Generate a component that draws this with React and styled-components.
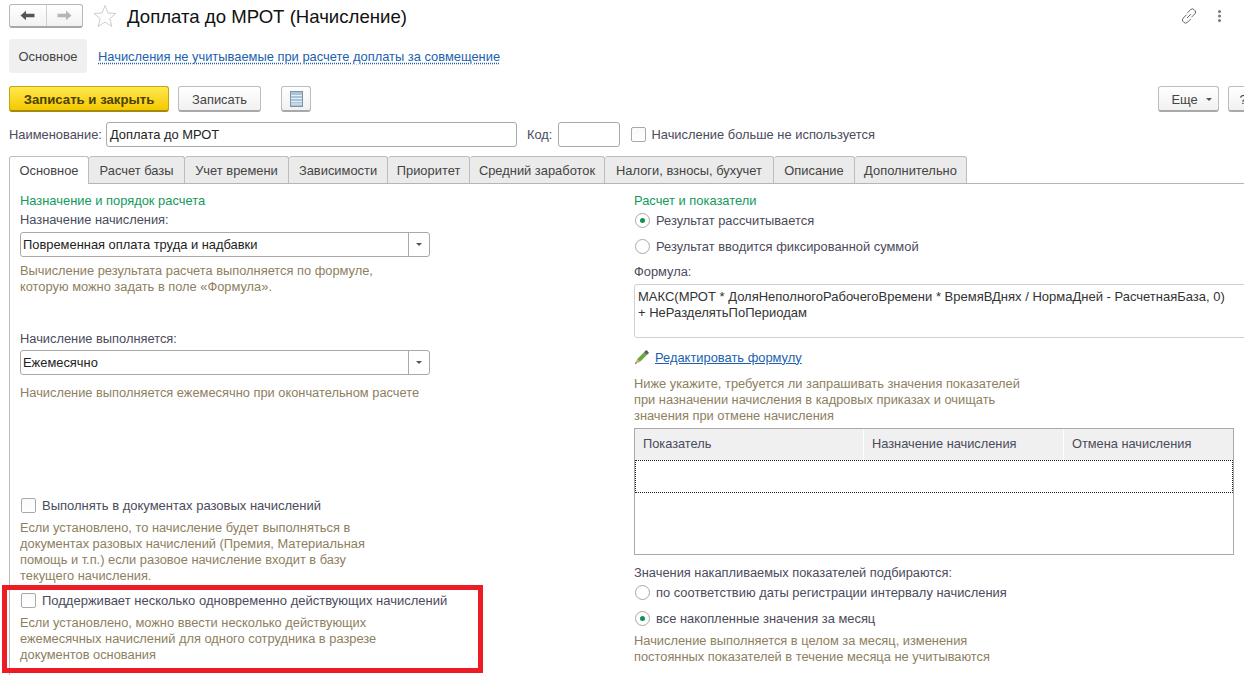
import React from 'react';
import styled, { createGlobalStyle } from 'styled-components';

const GlobalStyle = createGlobalStyle`
  html, body {
    margin: 0;
    padding: 0;
    background: #fff;
  }
  body {
    font-family: "Liberation Sans", Arial, sans-serif;
    font-size: 12.9px;
    color: #4b4b4b;
  }
`;

const Page = styled.div`
  position: relative;
  width: 1244px;
  height: 694px;
  overflow: hidden;
  background: #fff;
`;

const TitleBar = styled.div`
  display: flex;
  align-items: center;
  height: 24px;
  padding: 4px 0 0 9px;
`;

const NavGroup = styled.div`
  display: flex;
  width: 74px;
  height: 24px;
  box-sizing: border-box;
  border: 1px solid #b9b9b9;
  border-bottom: 2px solid #a8a8a8;
  border-radius: 3px;
  background: linear-gradient(#fff, #f2f2f2);
`;

const NavCell = styled.div`
  flex: 1;
  display: flex;
  align-items: center;
  justify-content: center;
  & + & {
    border-left: 1px solid #d0d0d0;
  }
`;

const Star = styled.svg`
  margin-left: 10px;
  flex-shrink: 0;
`;

const Title = styled.h1`
  margin: 0 0 0 10px;
  padding-top: 1px;
  font-size: 18.6px;
  font-weight: 400;
  color: #111;
  line-height: 24px;
`;

const TitleTools = styled.div`
  margin-left: auto;
  display: flex;
  align-items: center;
  gap: 20px;
  padding-right: 22px;
`;

const SectionNav = styled.div`
  display: flex;
  align-items: center;
  height: 34px;
  margin: 11px 0 0 9px;
`;

const SectionActive = styled.div`
  display: flex;
  align-items: center;
  justify-content: center;
  width: 78px;
  height: 34px;
  background: #f0f0f0;
  border-radius: 3px;
  color: #444;
`;

const SectionLink = styled.a`
  margin-left: 11px;
  color: #1c5fb0;
  text-decoration: underline dotted;
  text-underline-offset: 2px;
`;

const CommandBar = styled.div`
  display: flex;
  align-items: center;
  height: 26px;
  margin-top: 13px;
  padding-left: 9px;
`;

const Button = styled.button`
  display: flex;
  align-items: center;
  justify-content: center;
  gap: ${(p) => p.$gap || 6}px;
  flex-shrink: 0;
  height: 26px;
  width: ${(p) => p.$w}px;
  margin-left: ${(p) => p.$ml || 0}px;
  padding: 1px 0 0 ${(p) => p.$pl || 0}px;
  box-sizing: border-box;
  font-family: inherit;
  font-size: ${(p) => (p.$primary ? 13.2 : 12.9)}px;
  font-weight: ${(p) => (p.$primary ? 700 : 400)};
  color: ${(p) => (p.$primary ? '#4c4100' : '#444')};
  border: 1px solid ${(p) => (p.$primary ? '#c4a410' : '#bdbdbd')};
  border-bottom: 2px solid ${(p) => (p.$primary ? '#a58a08' : '#a9a9a9')};
  border-radius: 3px;
  background: ${(p) =>
    p.$primary
      ? 'linear-gradient(#ffe84f, #f4c900)'
      : 'linear-gradient(#fff, #f1f1f1)'};
`;

const MoreGroup = styled.div`
  margin-left: auto;
  margin-right: -14px;
  display: flex;
`;

const Caret = styled.span`
  display: inline-block;
  width: 0;
  height: 0;
  border-left: 3px solid transparent;
  border-right: 3px solid transparent;
  border-top: 3px solid #555;
`;

const NameRow = styled.div`
  display: flex;
  align-items: center;
  height: 25px;
  margin-top: 10px;
  padding-left: 9px;
`;

const RowLabel = styled.label`
  color: #4b4b5b;
  margin-left: ${(p) => p.$ml || 0}px;
`;

const TextInput = styled.div`
  display: flex;
  align-items: center;
  flex-shrink: 0;
  height: 25px;
  box-sizing: border-box;
  width: ${(p) => p.$w}px;
  margin-left: ${(p) => p.$ml || 0}px;
  padding-left: 3px;
  border: 1px solid #a9a9a9;
  border-radius: 3px;
  color: #222;
  background: #fff;
`;

const Check = styled.span`
  display: inline-block;
  flex-shrink: 0;
  width: 15px;
  height: 15px;
  box-sizing: border-box;
  border: 1px solid #a9a9a9;
  border-radius: 2px;
  background: linear-gradient(#fafafa, #fff);
  margin-left: ${(p) => p.$ml || 0}px;
`;

const CheckRow = styled.div`
  display: flex;
  align-items: center;
  gap: 6px;
  height: 16px;
  margin-top: ${(p) => p.$mt || 0}px;
  padding-left: 1px;
  font-size: 13px;
  color: #4b4b5b;
`;

const TabStrip = styled.div`
  display: flex;
  height: 28px;
  box-sizing: border-box;
  margin: 9px 0 0 9px;
  border-bottom: 1px solid #b5b5b5;
`;

const Tab = styled.div`
  display: flex;
  align-items: center;
  justify-content: center;
  box-sizing: border-box;
  width: ${(p) => p.$w}px;
  height: ${(p) => (p.$active ? 28 : 27)}px;
  color: #444;
  border: 1px solid #bdbdbd;
  border-left: ${(p) => (p.$active ? '1px solid #bdbdbd' : 'none')};
  border-bottom: none;
  border-radius: 3px 3px 0 0;
  background: ${(p) => (p.$active ? '#fff' : '#ebebeb')};
  position: relative;
  z-index: ${(p) => (p.$active ? 1 : 0)};
`;

const Panel = styled.div`
  display: grid;
  grid-template-columns: 614px 610px;
  height: 483px;
  margin-left: 9px;
  padding: 8px 0 0 10px;
  border-left: 1px solid #bdbdbd;
`;

const Column = styled.div`
  display: flex;
  flex-direction: column;
  min-width: 0;
`;

const GroupTitle = styled.div`
  height: 15px;
  padding-top: 1px;
  line-height: 16px;
  color: #129a5c;
`;

const FieldLabel = styled.div`
  height: 16px;
  line-height: 16px;
  margin-top: ${(p) => p.$mt || 0}px;
  font-size: 12.85px;
  color: #4b4b5b;
`;

const Select = styled.div`
  display: flex;
  width: 410px;
  height: 25px;
  box-sizing: border-box;
  margin-top: ${(p) => p.$mt || 0}px;
  border: 1px solid #a9a9a9;
  border-radius: 3px;
  color: #222;
`;

const SelectValue = styled.div`
  flex: 1;
  display: flex;
  align-items: center;
  padding-left: 2px;
`;

const SelectButton = styled.div`
  display: flex;
  align-items: center;
  justify-content: center;
  width: 20px;
  border-left: 1px solid #a9a9a9;
`;

const Hint = styled.div`
  margin-top: ${(p) => p.$mt || 0}px;
  line-height: 16px;
  font-size: 12.85px;
  color: #8d8060;
  white-space: pre-line;
`;

const RadioRow = styled.div`
  display: flex;
  align-items: center;
  gap: 6px;
  height: 16px;
  margin-top: ${(p) => p.$mt || 0}px;
  padding-left: 1px;
  color: #4b4b5b;
`;

const Radio = styled.span`
  display: flex;
  align-items: center;
  justify-content: center;
  flex-shrink: 0;
  width: 15px;
  height: 15px;
  box-sizing: border-box;
  border: 1px solid #a9a9a9;
  border-radius: 50%;
  background: #fff;
  &::after {
    content: '';
    display: ${(p) => (p.$on ? 'block' : 'none')};
    width: 5px;
    height: 5px;
    border-radius: 50%;
    background: #0f9158;
  }
`;

const Formula = styled.div`
  width: 640px;
  height: 54px;
  box-sizing: border-box;
  margin-top: 4px;
  padding: 4px 3px;
  border: 1px solid #d0d0d0;
  border-radius: 3px;
  line-height: 16px;
  font-size: 13px;
  color: #333;
  white-space: pre-line;
`;

const EditRow = styled.div`
  display: flex;
  align-items: center;
  gap: 6px;
  height: 16px;
  margin-top: 11px;
`;

const EditLink = styled.a`
  color: #1c5fb0;
  text-decoration: underline;
`;

const Table = styled.div`
  width: 600px;
  height: 127px;
  box-sizing: border-box;
  margin-top: 4px;
  border: 1px solid #a9a9a9;
`;

const TableHead = styled.div`
  display: grid;
  grid-template-columns: 228px 200px 1fr;
  height: 31px;
  background: #f0f0f0;
`;

const HeadCell = styled.div`
  display: flex;
  align-items: center;
  padding: 0 0 3px 8px;
  font-size: 12.8px;
  color: #4b4b5b;
  & + & {
    border-left: 1px solid #fff;
  }
`;

const ActiveRow = styled.div`
  height: 33px;
  box-sizing: border-box;
  border: 1px dotted #222;
`;

const RedFrame = styled.div`
  position: absolute;
  left: 2px;
  top: 585px;
  width: 481px;
  height: 88px;
  box-sizing: border-box;
  border: 5px solid #ed1c24;
  pointer-events: none;
`;

const tabs = [
  ['Основное', 80],
  ['Расчет базы', 96],
  ['Учет времени', 104],
  ['Зависимости', 99],
  ['Приоритет', 82],
  ['Средний заработок', 135],
  ['Налоги, взносы, бухучет', 169],
  ['Описание', 81],
  ['Дополнительно', 112],
];

function NavArrow({ color, back }) {
  return (
    <svg width="15" height="11" viewBox="0 0 15 11">
      <path
        d={back ? 'M0.5 5.5 6 0.8V3.8H14.5V7.2H6V10.2Z' : 'M14.5 5.5 9 0.8V3.8H0.5V7.2H9V10.2Z'}
        fill={color}
      />
    </svg>
  );
}

export default function App() {
  return (
    <Page>
      <GlobalStyle />

      <TitleBar>
        <NavGroup>
          <NavCell>
            <NavArrow back color="#555" />
          </NavCell>
          <NavCell>
            <NavArrow color="#b5b5b5" />
          </NavCell>
        </NavGroup>
        <Star width="24" height="24" viewBox="0 0 24 24">
          <path
            d="M12 1.5 15 9 23 9.5 16.8 14.6 18.9 22.5 12 18.1 5.1 22.5 7.2 14.6 1 9.5 9 9Z"
            fill="#fff"
            stroke="#c9ced3"
            strokeWidth="1"
          />
        </Star>
        <Title>Доплата до МРОТ (Начисление)</Title>
        <TitleTools>
          <svg width="16" height="16" viewBox="0 0 16 16" fill="none" stroke="#666" strokeWidth="1">
            <path d="M6.2 5 9.6 1.7a2.5 2.5 0 0 1 3.6 0l.6.6a2.5 2.5 0 0 1 0 3.6L10.4 9.3" />
            <path d="M9.8 11 6.4 14.3a2.5 2.5 0 0 1-3.6 0l-.6-.6a2.5 2.5 0 0 1 0-3.6L5.6 6.7" />
            <path d="M6 10 10 6" />
          </svg>
          <svg width="5" height="12" viewBox="0 0 5 12" fill="#777">
            <circle cx="2.5" cy="1.5" r="1.5" />
            <circle cx="2.5" cy="6" r="1.5" />
            <circle cx="2.5" cy="10.5" r="1.5" />
          </svg>
        </TitleTools>
      </TitleBar>

      <SectionNav>
        <SectionActive>Основное</SectionActive>
        <SectionLink>Начисления не учитываемые при расчете доплаты за совмещение</SectionLink>
      </SectionNav>

      <CommandBar>
        <Button $primary $w={160}>Записать и закрыть</Button>
        <Button $w={83} $ml={9}>Записать</Button>
        <Button $w={30} $ml={20}>
          <svg width="13" height="16" viewBox="0 0 13 16">
            <rect x="0.5" y="0.5" width="12" height="15" fill="#a9c3d8" stroke="#7d93a6" />
            <path d="M1 4.5H12M1 7.5H12M1 10.5H12M1 13H12" stroke="#e8eef3" strokeWidth="1" />
          </svg>
        </Button>
        <MoreGroup>
          <Button $w={61} $pl={6} $gap={8}>
            Еще <Caret />
          </Button>
          <Button $w={30} $ml={9}>?</Button>
        </MoreGroup>
      </CommandBar>

      <NameRow>
        <RowLabel>Наименование:</RowLabel>
        <TextInput $w={411} $ml={4}>Доплата до МРОТ</TextInput>
        <RowLabel $ml={10}>Код:</RowLabel>
        <TextInput $w={62} $ml={6} />
        <Check $ml={11} />
        <RowLabel $ml={5}>Начисление больше не используется</RowLabel>
      </NameRow>

      <TabStrip>
        {tabs.map(([name, width], index) => (
          <Tab key={name} $w={width} $active={index === 0}>{name}</Tab>
        ))}
      </TabStrip>

      <Panel>
        <Column>
          <GroupTitle>Назначение и порядок расчета</GroupTitle>
          <FieldLabel $mt={4}>Назначение начисления:</FieldLabel>
          <Select $mt={4}>
            <SelectValue>Повременная оплата труда и надбавки</SelectValue>
            <SelectButton><Caret /></SelectButton>
          </Select>
          <Hint $mt={6}>{'Вычисление результата расчета выполняется по формуле,\nкоторую можно задать в поле «Формула».'}</Hint>
          <FieldLabel $mt={36}>Начисление выполняется:</FieldLabel>
          <Select $mt={3}>
            <SelectValue>Ежемесячно</SelectValue>
            <SelectButton><Caret /></SelectButton>
          </Select>
          <Hint $mt={10}>Начисление выполняется ежемесячно при окончательном расчете</Hint>
          <CheckRow $mt={96}>
            <Check />
            Выполнять в документах разовых начислений
          </CheckRow>
          <Hint $mt={7}>{'Если установлено, то начисление будет выполняться в\nдокументах разовых начислений (Премия, Материальная\nпомощь и т.п.) если разовое начисление входит в базу\nтекущего начисления.'}</Hint>
          <CheckRow $mt={8}>
            <Check />
            Поддерживает несколько одновременно действующих начислений
          </CheckRow>
          <Hint $mt={7}>{'Если установлено, можно ввести несколько действующих\nежемесячных начислений для одного сотрудника в разрезе\nдокументов основания'}</Hint>
        </Column>

        <Column>
          <GroupTitle>Расчет и показатели</GroupTitle>
          <RadioRow $mt={4}>
            <Radio $on />
            Результат рассчитывается
          </RadioRow>
          <RadioRow $mt={10}>
            <Radio />
            Результат вводится фиксированной суммой
          </RadioRow>
          <FieldLabel $mt={10}>Формула:</FieldLabel>
          <Formula>{'МАКС(МРОТ * ДоляНеполногоРабочегоВремени * ВремяВДнях / НормаДней - РасчетнаяБаза, 0)\n+ НеРазделятьПоПериодам'}</Formula>
          <EditRow>
            <svg width="15" height="15" viewBox="0 0 15 15">
              <path d="M3 9.2 10 2.2l2.8 2.8-7 7Z" fill="#6aa842" />
              <path d="M10 2.2 11.6.6a1 1 0 0 1 1.4 0l1.4 1.4a1 1 0 0 1 0 1.4L12.8 5Z" fill="#5a5f63" />
              <path d="M3 9.2 5.8 12 1 14Z" fill="#d9a865" />
              <path d="M1.7 12.3 2.7 13.3 1 14Z" fill="#444" />
            </svg>
            <EditLink>Редактировать формулу</EditLink>
          </EditRow>
          <Hint $mt={11}>{'Ниже укажите, требуется ли запрашивать значения показателей\nпри назначении начисления в кадровых приказах и очищать\nзначения при отмене начисления'}</Hint>
          <Table>
            <TableHead>
              <HeadCell>Показатель</HeadCell>
              <HeadCell>Назначение начисления</HeadCell>
              <HeadCell>Отмена начисления</HeadCell>
            </TableHead>
            <ActiveRow />
          </Table>
          <FieldLabel $mt={10}>Значения накапливаемых показателей подбираются:</FieldLabel>
          <RadioRow $mt={3}>
            <Radio />
            по соответствию даты регистрации интервалу начисления
          </RadioRow>
          <RadioRow $mt={10}>
            <Radio $on />
            все накопленные значения за месяц
          </RadioRow>
          <Hint $mt={7}>{'Начисление выполняется в целом за месяц, изменения\nпостоянных показателей в течение месяца не учитываются'}</Hint>
        </Column>
      </Panel>

      <RedFrame />
    </Page>
  );
}
